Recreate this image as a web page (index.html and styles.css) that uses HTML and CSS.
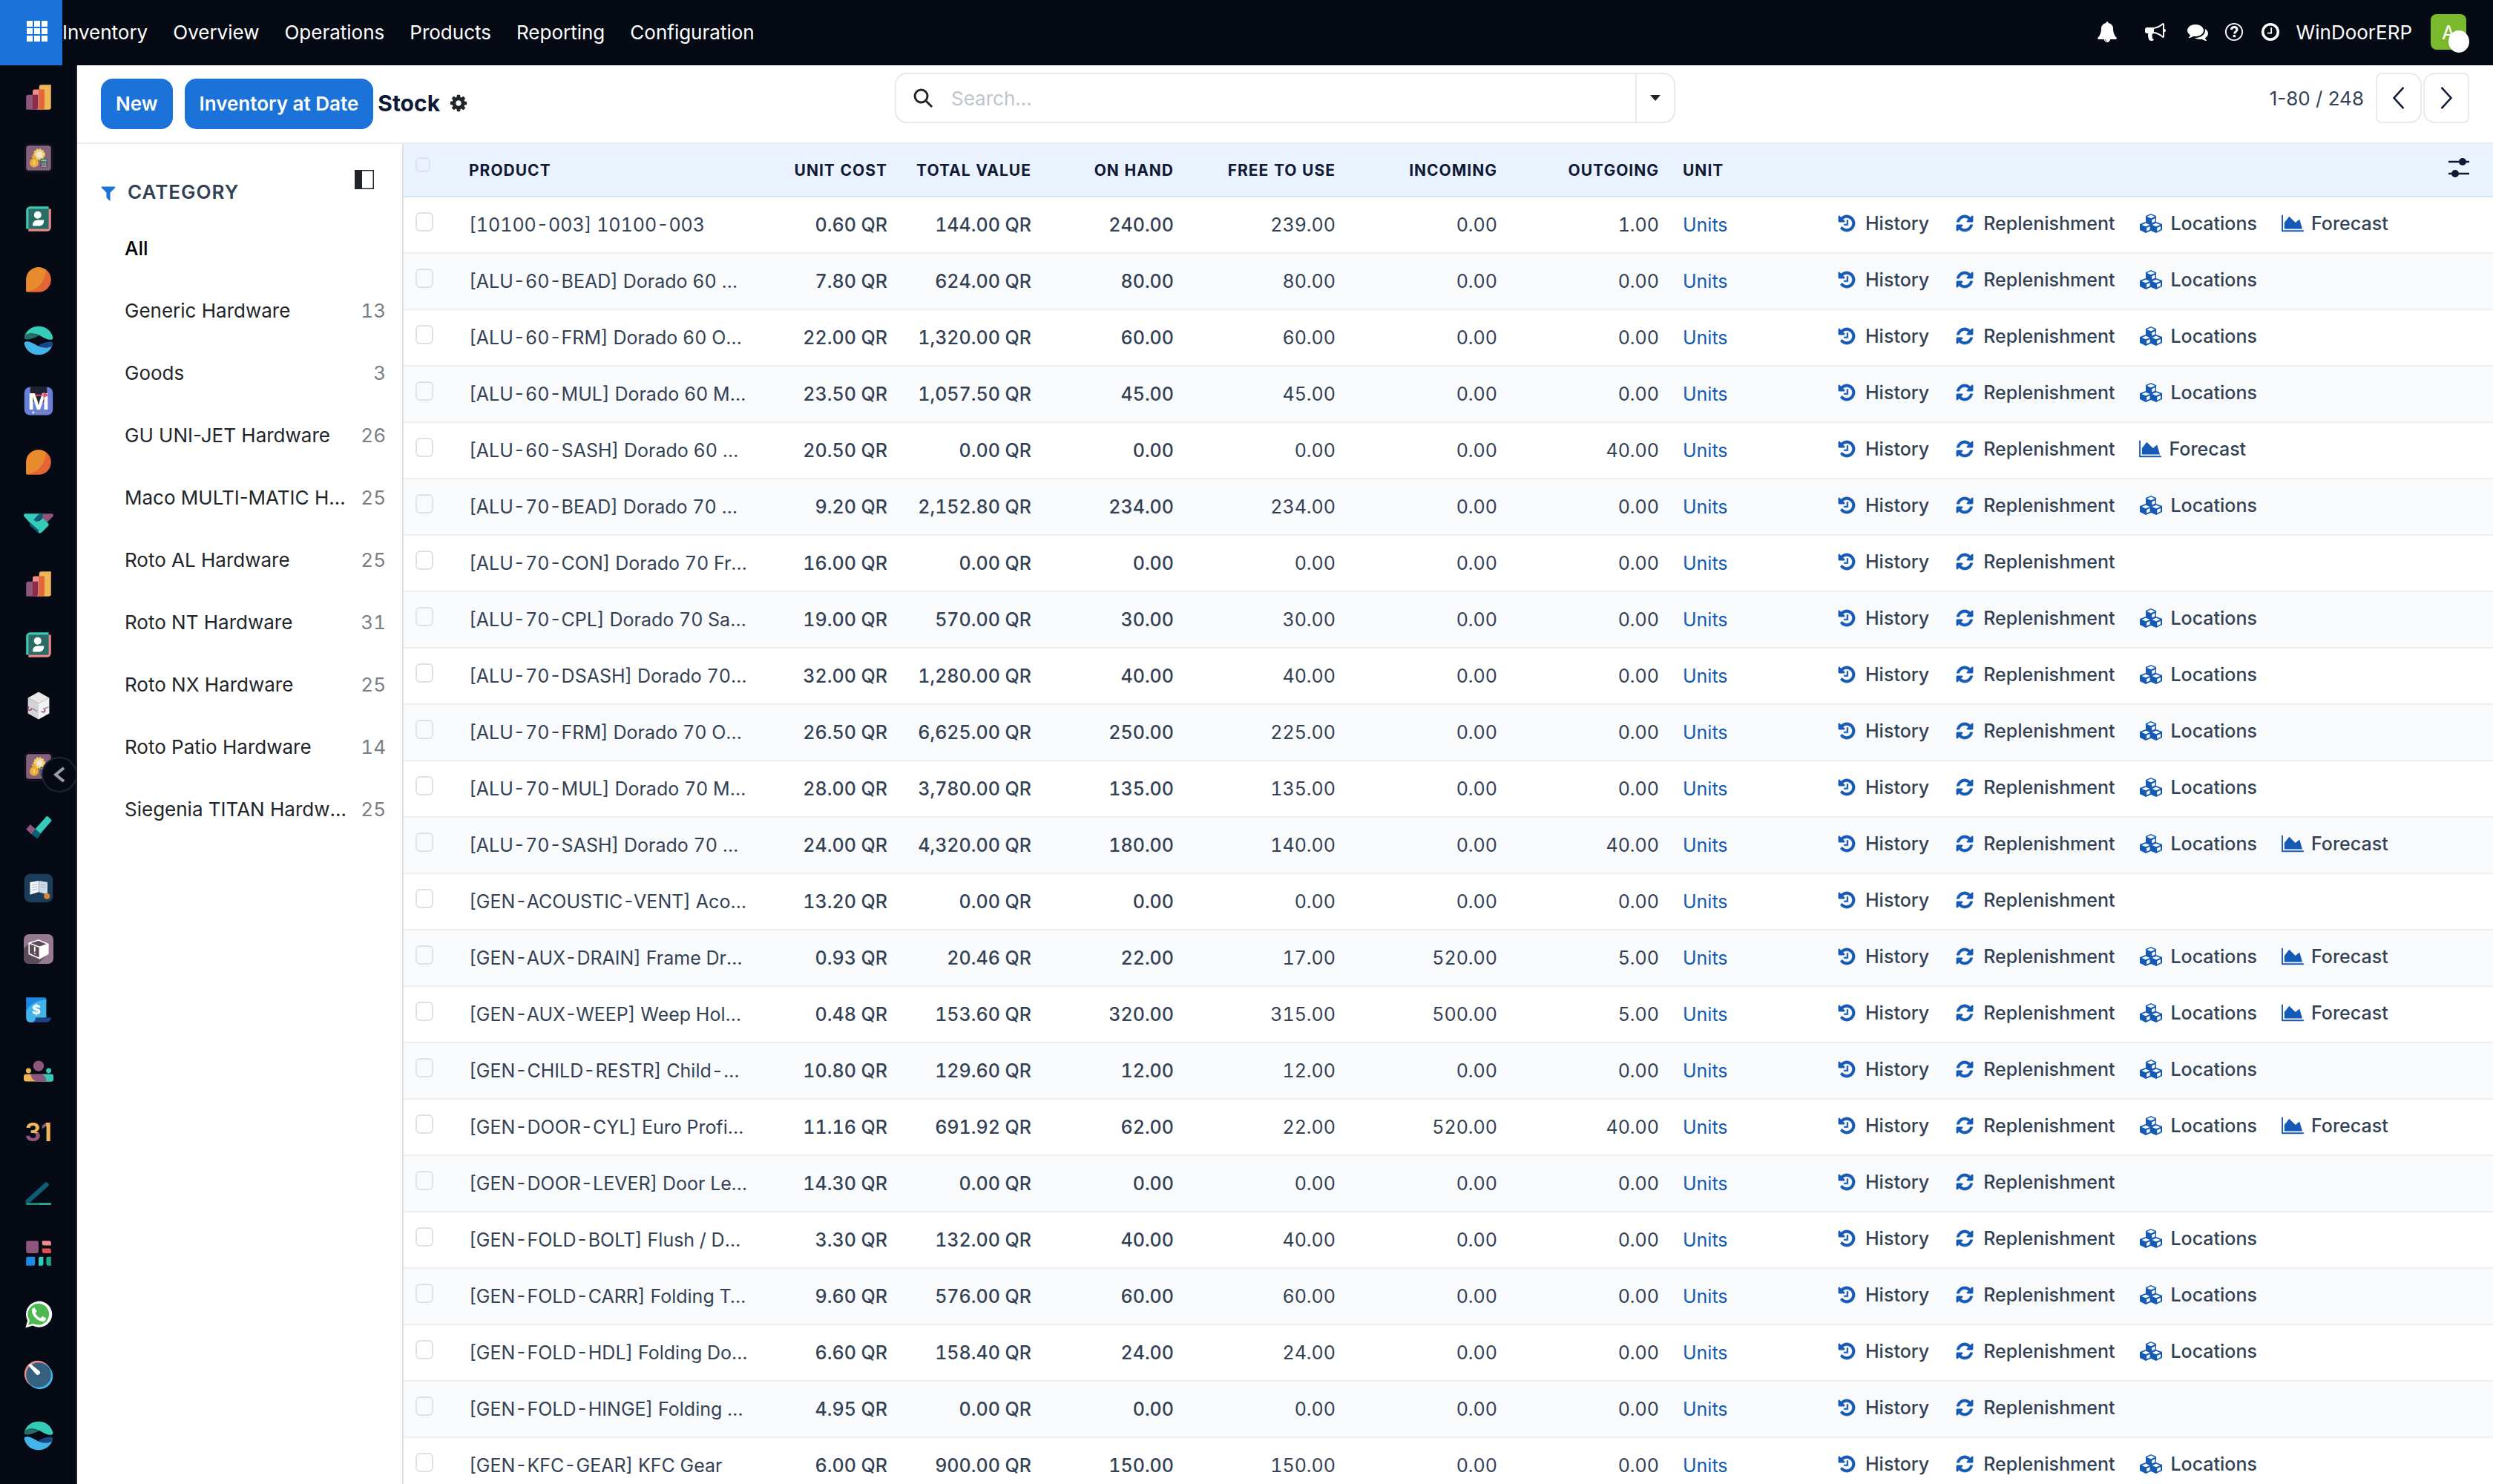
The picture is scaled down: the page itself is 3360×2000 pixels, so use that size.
FILE: index.html
```html
<!DOCTYPE html>
<html lang="en">
<head>
    <meta charset="UTF-8">
    <meta name="viewport" content="width=device-width, initial-scale=1.0">
    <title>Stock - Inventory</title>
    <link rel="stylesheet" href="styles.css">
</head>
<body>
    <!-- Icon sprite -->
    <svg class="sprite" xmlns="http://www.w3.org/2000/svg">
        <symbol id="i-history" viewBox="0 0 1792 1792"><path stroke="currentColor" stroke-width="35" d="M1664 896q0 156-61 298t-164 245-245 164-298 61q-172 0-327-72.500t-264-204.500q-7-10-6.500-22.500t8.500-20.500l137-138q10-9 25-9 16 2 23 12 73 95 179 147t225 52q104 0 198.500-40.500t163.500-109.500 109.500-163.500 40.500-198.500-40.500-198.500-109.500-163.500-163.500-109.500-198.500-40.500q-98 0-188 35.500t-160 101.500l137 138q31 30 14 69-17 40-59 40h-448q-26 0-45-19t-19-45v-448q0-42 40-59 39-17 69 14l130 129q107-101 244.500-156.500t284.500-55.500q156 0 298 61t245 164 164 245 61 298zm-640-288v448q0 14-9 23t-23 9h-320q-14 0-23-9t-9-23v-64q0-14 9-23t23-9h224v-352q0-14 9-23t23-9h64q14 0 23 9t9 23z"/></symbol>
        <symbol id="i-refresh" viewBox="0 0 1792 1792"><path stroke="currentColor" stroke-width="35" d="M1639 1056q0 5-1 7-64 268-268 434.500t-478 166.500q-146 0-282.500-55t-243.500-157l-129 129q-19 19-45 19t-45-19-19-45v-448q0-26 19-45t45-19h448q26 0 45 19t19 45-19 45l-137 137q71 66 161 102t187 36q134 0 250-65t186-179q11-17 53-117 8-23 30-23h192q13 0 22.500 9.500t9.500 22.500zm25-800v448q0 26-19 45t-45 19h-448q-26 0-45-19t-19-45 19-45l138-138q-148-137-349-137-134 0-250 65t-186 179q-11 17-53 117-8 23-30 23h-199q-13 0-22.500-9.500t-9.500-22.500v-7q65-268 270-434.500t480-166.500q146 0 284 55.500t245 156.500l130-129q19-19 45-19t45 19 19 45z"/></symbol>
        <symbol id="i-cubes" viewBox="0 0 32 28">
            <path fill="currentColor" d="M16 1l7 3v8l8 3v8l-8 4-7-3-7 3-8-4v-8l8-3V4z"/>
            <path fill="#fff" d="M16 2.600l5.400 2.300L16 7.300l-5.400-2.400zM17.200 9.200l4.400-2v4.400l-4.400 2zM9 13.700l5.400 2.200L9 18.300l-5.400-2.400zM10.200 20.100l4.400-2v4.400l-4.400 2zM23 13.700l5.400 2.200-5.400 2.400-5.400-2.400zM24.200 20.100l4.800-2.200v4.400l-4.800 2.300z"/>
        </symbol>
        <symbol id="i-chart" viewBox="0 0 2048 1792"><path d="M2048 1536v128h-2048v-1536h128v1408h1920zm-384-1024l256 896h-1664v-576l448-576 576 576z"/></symbol>
        <symbol id="i-filter" viewBox="0 0 1792 1792"><path d="M1595 295q17 41-14 70l-493 493v742q0 42-39 59-13 5-25 5-27 0-45-19l-256-256q-19-19-19-45v-486l-493-493q-31-29-14-70 17-39 59-39h1280q42 0 59 39z"/></symbol>
        <symbol id="i-cog" viewBox="0 0 1792 1792"><path d="M1152 896q0-106-75-181t-181-75-181 75-75 181 75 181 181 75 181-75 75-181zm512-109v222q0 12-8 23t-20 13l-185 28q-19 54-39 91 35 50 107 138 10 12 10 25t-9 23q-27 37-99 108t-94 71q-12 0-26-9l-138-108q-44 23-91 38-16 136-29 186-7 28-36 28h-222q-14 0-24.500-8.500t-11.500-21.500l-28-184q-49-16-90-37l-141 107q-10 9-25 9-14 0-25-11-126-114-165-168-7-10-7-23 0-12 8-23 15-21 51-66.500t54-70.500q-27-50-41-99l-183-27q-13-2-21-12.500t-8-23.500v-222q0-12 8-23t19-13l186-28q14-46 39-92-40-57-107-138-10-12-10-24 0-10 9-23 26-36 98.500-107.500t94.500-71.500q13 0 26 10l138 107q44-23 91-38 16-136 29-186 7-28 36-28h222q14 0 24.500 8.500t11.500 21.500l28 184q49 16 90 37l142-107q9-9 24-9 13 0 25 10 129 119 165 170 7 8 7 22 0 12-8 23-15 21-51 66.500t-54 70.500q26 50 41 98l183 28q13 2 21 12.500t8 23.500z"/></symbol>
        <symbol id="i-bell" viewBox="0 0 1792 1792"><path d="M912 1696q0-16-16-16-59 0-101.500-42.500t-42.500-101.500q0-16-16-16t-16 16q0 73 51.500 124.500t124.500 51.500q16 0 16-16zm816-288q0 52-38 90t-90 38h-448q0 106-75 181t-181 75-181-75-75-181h-448q-52 0-90-38t-38-90q50-42 91-88t85-119.500 74.500-158.500 50-206 19.500-260q0-152 117-282.500t307-158.500q-8-19-8-39 0-40 28-68t68-28 68 28 28 68q0 20-8 39 190 28 307 158.500t117 282.500q0 139 19.500 260t50 206 74.500 158.500 85 119.500 91 88z"/></symbol>
        <symbol id="i-bullhorn" viewBox="0 0 1792 1792"><path d="M1664 640q53 0 90.500 37.500t37.500 90.500-37.500 90.500-90.500 37.500v384q0 52-38 90t-90 38q-417-347-812-380-58 19-91 66t-31 100.500 40 92.500q-20 33-23 65.500t6 58 33.500 55 48 50 61.500 50.500q-29 58-111.500 83t-168.500 11.500-132-55.500q-7-23-29.500-87.500t-32-94.500-23-89-15-101 3.500-98.500 22-110.500h-122q-66 0-113-47t-47-113v-192q0-66 47-113t113-47h480q435 0 896-384 52 0 90 38t38 90v384zm-128 604v-954q-394 302-768 343v270q377 42 768 341z"/></symbol>
        <symbol id="i-comments" viewBox="0 0 1792 1792"><path d="M1408 768q0 139-94 257t-256.500 186.500-353.500 68.500q-86 0-176-16-124 88-278 128-36 9-86 16h-3q-11 0-20.500-8t-11.500-21q-1-3-1-6.500t.5-6.500 2-6l2.500-5 3.500-5.500 4-5 4.500-5 4-4.500q5-6 23-25t26-29.500 22.500-29 25-38.500 20.500-44q-124-72-195-177t-71-224q0-139 94-257t256.500-186.500 353.500-68.500 353.500 68.500 256.500 186.500 94 257zm384 256q0 120-71 224.500t-195 176.500q10 24 20.500 44t25 38.500 22.500 29 26 29.500 23 25q1 1 4 4.500t4.500 5 4 5 3.500 5.500l2.500 5 2 6 .5 6.500-1 6.500q-3 14-13 22t-22 7q-50-7-86-16-154-40-278-128-90 16-176 16-271 0-472-132 58 4 88 4 161 0 309-45t264-129q125-92 192-212t67-254q0-77-23-152 129 71 204 178t75 230z"/></symbol>
        <symbol id="i-help" viewBox="0 0 28 28"><circle cx="14" cy="14" r="11.200" fill="none" stroke="currentColor" stroke-width="1.800"/><path d="M10.300 11c.5-2.400 2-3.400 3.900-3.400 2.200 0 3.800 1.300 3.800 3.200 0 2.800-3.400 2.700-3.400 5.600" fill="none" stroke="currentColor" stroke-width="3"/><rect x="12.700" y="18" width="3.400" height="3.200"/></symbol>
        <symbol id="i-clock" viewBox="0 0 28 28"><circle cx="14" cy="14" r="10.300" fill="none" stroke="currentColor" stroke-width="3.600"/><path d="M15.200 8v7.600H9.800" fill="none" stroke="currentColor" stroke-width="1.800"/></symbol>

        <symbol id="app-bars" viewBox="0 0 50 50">
            <path fill="#edb659" d="M26 8a4 4 0 0 1 4-4h16v38a4 4 0 0 1-4 4H26z"/>
            <path fill="#ee8b8d" d="M15 16a4 4 0 0 1 4-4h7v34H15z"/>
            <path fill="#e46535" d="M26 12h9v30a4 4 0 0 1-4 4h-5z"/>
            <path fill="#8e557d" d="M4 25a4 4 0 0 1 4-4h7v25H4z"/>
            <path fill="#8c2c45" d="M15 21h9v21a4 4 0 0 1-4 4h-5z"/>
        </symbol>
        <symbol id="app-cost" viewBox="0 0 50 50">
            <rect x="1.500" y="1.500" width="47" height="47" rx="8" fill="#0a0a14" stroke="#25222e"/>
            <rect x="4" y="4" width="42" height="42" rx="5" fill="#85627b"/>
            <circle cx="26" cy="19" r="8.500" fill="#f5d268" stroke="#f5d268" stroke-width="3" stroke-dasharray="3 2"/>
            <circle cx="26.500" cy="19.500" r="5" fill="#ece9dc"/>
            <circle cx="17.500" cy="33" r="7.500" fill="#e9ad38"/>
            <path d="M13 21h8l-2 5h-4z" fill="#e9ad38"/>
            <path d="M19.500 30.500c-3-1.500-4 2-2 2.500s1 3.500-2 2.500" fill="none" stroke="#f8dc7c" stroke-width="1.400"/>
            <rect x="28" y="26" width="12" height="15" rx="1" fill="#51525e"/>
            <rect x="29.500" y="27.500" width="9" height="3" fill="#63d8a7"/>
            <path d="M30 33.500h8M30 36.500h8M30 39.200h8" stroke="#c5c6cc" stroke-width="1.600" stroke-dasharray="2 1"/>
        </symbol>
        <symbol id="app-contacts" viewBox="0 0 50 50">
            <path fill="#35cbb9" d="M4 11a7 7 0 0 1 7-7h31v38H4z"/>
            <path fill="#ee8b8d" d="M8 8h38v31a7 7 0 0 1-7 7H8z"/>
            <path fill="#276c66" d="M8 8h34v34H8z"/>
            <circle cx="23.500" cy="18.500" r="6.200" fill="#fff"/>
            <path fill="#fff" d="M15 37v-1.500c0-5 3.500-8.500 8.500-8.500H34v1.500c0 5-3.500 8.500-8.500 8.500z"/>
        </symbol>
        <symbol id="app-discuss" viewBox="0 0 50 50">
            <path fill="#e46535" d="M4 25a21 21 0 1 1 21 21H7a3 3 0 0 1-3-3z"/>
            <path fill="#e78b2c" d="M4 25A21 21 0 0 1 37.500 8C37 27 24 43 5 45.300a3 3 0 0 1-1-2.300z"/>
        </symbol>
        <symbol id="app-swirl" viewBox="0 0 50 50">
            <path fill="#35cbb9" d="M1 19C4 8 13 1 25 1s21 7 24 18c1 5-4 5-8 4-10-3-16-10-27-10C7 13 3 15 1 19z"/>
            <path fill="#276c66" d="M1 19c1-5 6-6 12-6 5 0 9 2 12.500 4C19 20 13 23 6 23c-4 0-6-1-5-4z"/>
            <path fill="#1b4589" d="M25 33c6-3 12-6 19-6 4 0 5.500 1 5 4-.6 3-5 6-12 6-5 0-9-2-12-4z"/>
            <path fill="#43b4ea" d="M1 31c-1-5 4-5 8-4 10 3 16 10 27 10 6 0 10-1 12.500-4.500C45 42 37 49 25 49S4 42 1 31z"/>
        </symbol>
        <symbol id="app-hand" viewBox="0 0 50 50">
            <path fill="#8e557d" d="M25 9h22c3 0 4 3 2 5L39 24 25 14zM10 26l14 15c2 1 3 0 4-1l-9-14z"/>
            <path fill="#35cbb9" d="M3 9h25l-8 9 5 4 7-5 9 8c2 2 1 4 0 5L30 41c-2 1-4 1-5 0L1 14c-2-2-1-5 2-5z"/>
            <path fill="#0f5c76" d="M26 9h6v7l-7 5c-3 2-7 1-8-2zM12 25l13 12c1 2 0 3-1 4L10 29c-1-2 0-4 2-4z"/>
        </symbol>
        <symbol id="app-cube" viewBox="0 0 50 50">
            <path fill="#e9e9ea" d="M25 2l18 10-18 9L7 12z"/>
            <path fill="#d4d4d7" d="M7 12l18 9v27L7 38z"/>
            <path fill="#f1f1f2" d="M43 12l-18 9v27l18-10z"/>
            <path d="M9 27a3 3 0 1 0 4 2M30 34a3 3 0 1 0 3-4" fill="none" stroke="#96377d" stroke-width="1.800"/>
            <path d="M14 30l3 1 3 2 3 1M34 31l3-2 3-1 2-1" fill="none" stroke="#9a9a9d" stroke-width="2"/>
        </symbol>
        <symbol id="app-check" viewBox="0 0 50 50">
            <path fill="#35cbb9" d="M19 28L38 7a2 2 0 0 1 3 0l5 5a2 2 0 0 1 0 3L28 36z"/>
            <path fill="#8e557d" d="M4 28l7-8 9 8-7 9z"/>
            <path fill="#0f5c76" d="M13 37l7-9 9 8-6 8z"/>
        </symbol>
        <symbol id="app-book" viewBox="0 0 50 50">
            <rect x="1" y="1" width="48" height="48" rx="10" fill="#1b3d5a"/>
            <path fill="#f3f6f8" d="M10.500 15L25 12.500v19L10.500 36z"/>
            <path fill="#cfdde8" d="M40 15l-14.500-2.500v19L40 36z"/>
            <path d="M14 20l9-1.500M14 24l9-1.500M14 28l9-1.500M28 18.500l9 1.500M28 22.500l9 1.500" stroke="#8fa9bc" stroke-width="1"/>
            <circle cx="39" cy="38.500" r="5" fill="#d6853b"/>
        </symbol>
        <symbol id="app-box" viewBox="0 0 50 50">
            <rect width="50" height="50" rx="9" fill="#967a92"/>
            <path fill="#5c4b59" d="M0 24L10 15l31 17-17 18H9a9 9 0 0 1-9-9z"/>
            <path fill="#5c4b59" stroke="#fff" stroke-width="2" stroke-linejoin="round" d="M9 15l16-5 16 7-14 5zM9 15l18 7v19L9 33z"/>
            <path fill="#fff" stroke="#fff" stroke-width="2" stroke-linejoin="round" d="M27 22l14-5v16l-14 8z"/>
            <path d="M18.500 21v8.500M18.500 31.500v2" stroke="#fff" stroke-width="2.400"/>
        </symbol>
        <symbol id="app-people" viewBox="0 0 50 50">
            <circle cx="8" cy="25" r="4.300" fill="#edb659"/><circle cx="42" cy="25" r="4.300" fill="#35cbb9"/><circle cx="25" cy="17" r="9" fill="#8e557d"/>
            <rect x="0" y="31" width="50" height="12" rx="4" fill="#edb659"/>
            <path fill="#35cbb9" d="M30 31h17a3 3 0 0 1 3 3v6a3 3 0 0 1-3 3H30z"/>
            <path fill="#8e557d" d="M12 31h16c6 0 10 5 10 12H24c-7 0-12-5-12-12z"/>
        </symbol>
        <symbol id="app-sign" viewBox="0 0 50 50">
            <path d="M7 40L38 12" stroke="#0f5c76" stroke-width="8" stroke-linecap="round"/>
            <path d="M4 44.500h24" stroke="#1ea887" stroke-width="3"/><path d="M27 44.500h19" stroke="#35cbb9" stroke-width="3"/>
        </symbol>
        <symbol id="app-dash" viewBox="0 0 50 50">
            <rect x="4" y="4" width="21" height="21" rx="3" fill="#8e557d"/>
            <path fill="#ee8b8d" d="M31 4h12a3 3 0 0 1 3 3v5H34a3 3 0 0 1-3-3z"/><path fill="#e34d52" d="M31 17h12a3 3 0 0 1 3 3v5H34a3 3 0 0 1-3-3z"/>
            <path fill="#1e88e5" d="M7 31h12v12a3 3 0 0 1-3 3H4V34a3 3 0 0 1 3-3z"/><path fill="#35cbb9" d="M28 31h5v12a3 3 0 0 1-3 3h-5V34a3 3 0 0 1 3-3z"/><path fill="#1ea887" d="M41 31h5v15h-5a3 3 0 0 1-3-3v-9a3 3 0 0 1 3-3z"/>
        </symbol>
        <symbol id="app-whatsapp" viewBox="0 0 50 50">
            <path fill="#fff" d="M3 48l3.500-12A22 22 0 1 1 15 44.500z"/>
            <path fill="#4cb850" d="M7.500 43.500l2.400-8A18 18 0 1 1 16 41z"/>
            <path fill="#fff" d="M18 14c-2-.5-5 2-4.500 6C15 29 23 36 31 37.500c4 .5 6.500-2 6.500-5.500l-6-3.500-3 3.500c-4-1.500-7-4.500-9-8.500l2.500-3z"/>
        </symbol>
        <symbol id="app-gauge" viewBox="0 0 50 50">
            <circle cx="23.500" cy="23.500" r="22.500" fill="#ee8b8d"/><circle cx="27" cy="27" r="22" fill="#43b4ea"/><circle cx="25" cy="25" r="21" fill="#35607f"/>
            <path fill="#fff" d="M8 9l3-3 15 12a3.600 3.600 0 1 1-5 6z"/>
        </symbol>
    </svg>

    <header class="topbar">
        <button class="apps-button" aria-label="Apps">
            <svg viewBox="0 0 28 28"><path d="M0 0h8v8H0zM10 0h8v8h-8zM20 0h8v8h-8zM0 10h8v8H0zM10 10h8v8h-8zM20 10h8v8h-8zM0 20h8v8H0zM10 20h8v8h-8zM20 20h8v8h-8z"/></svg>
        </button>
        <nav class="main-menu">
            <a href="#">Inventory</a>
            <a href="#">Overview</a>
            <a href="#">Operations</a>
            <a href="#">Products</a>
            <a href="#">Reporting</a>
            <a href="#">Configuration</a>
        </nav>
        <div class="systray">
            <button class="bell" aria-label="Notifications"><svg><use href="#i-bell"/></svg></button>
            <button class="news" aria-label="Announcements"><svg><use href="#i-bullhorn"/></svg></button>
            <button aria-label="Messages"><svg><use href="#i-comments"/></svg></button>
            <button aria-label="Help"><svg><use href="#i-help"/></svg></button>
            <button aria-label="Activities"><svg><use href="#i-clock"/></svg></button>
            <a class="company" href="#">WinDoorERP</a>
            <button class="avatar" aria-label="User menu">A<span class="status"></span></button>
        </div>
    </header>

    <div class="layout">
        <nav class="app-sidebar" id="appSidebar">
            <button class="collapse-button" aria-label="Collapse sidebar">
                <svg viewBox="0 0 20 24"><path d="M16 3L5 12l11 9" fill="none" stroke="currentColor" stroke-width="4"/></svg>
            </button>
        </nav>

        <main class="content">
            <div class="control-panel">
                <div class="panel-left">
                    <button class="btn">New</button>
                    <button class="btn">Inventory at Date</button>
                    <div class="breadcrumb">
                        <h1>Stock</h1>
                        <button class="cog" aria-label="Actions"><svg><use href="#i-cog"/></svg></button>
                    </div>
                </div>
                <div class="search">
                    <svg class="search-icon" viewBox="0 0 28 28"><circle cx="11.500" cy="11.500" r="8.500"/><path d="M17.500 17.500l8.500 8.500"/></svg>
                    <input type="text" placeholder="Search..." aria-label="Search">
                    <button class="search-toggle" aria-label="Search options"><svg viewBox="0 0 14 8"><path d="M0 0h14L7 8z"/></svg></button>
                </div>
                <div class="pager">
                    <span>1-80 / 248</span>
                    <div class="pager-buttons">
                        <button class="prev" aria-label="Previous"><svg viewBox="0 0 28 28"><path d="M19 3L9 14l10 11"/></svg></button>
                        <button class="next" aria-label="Next"><svg viewBox="0 0 28 28"><path d="M9 3l10 11L9 25"/></svg></button>
                    </div>
                </div>
            </div>

            <div class="view">
                <aside class="category-panel">
                    <div class="category-header">
                        <svg class="filter-icon"><use href="#i-filter"/></svg>
                        <h2>Category</h2>
                        <button class="panel-toggle" aria-label="Toggle panel"><svg viewBox="0 0 28 28"><path fill-rule="evenodd" d="M1 1h26v26H1zM11 2.500v23h14.500v-23z"/></svg></button>
                    </div>
                    <ul class="category-list">
                        <li class="active"><a href="#">All</a></li>
                        <li><a href="#">Generic Hardware</a><span>13</span></li>
                        <li><a href="#">Goods</a><span>3</span></li>
                        <li><a href="#">GU UNI-JET Hardware</a><span>26</span></li>
                        <li><a href="#">Maco MULTI-MATIC Hardware</a><span>25</span></li>
                        <li><a href="#">Roto AL Hardware</a><span>25</span></li>
                        <li><a href="#">Roto NT Hardware</a><span>31</span></li>
                        <li><a href="#">Roto NX Hardware</a><span>25</span></li>
                        <li><a href="#">Roto Patio Hardware</a><span>14</span></li>
                        <li><a href="#">Siegenia TITAN Hardware</a><span>25</span></li>
                    </ul>
                </aside>

                <div class="list">
                    <table>
                        <colgroup>
                            <col class="c-check"><col class="c-product"><col class="c-cost"><col class="c-total"><col class="c-hand"><col class="c-qty"><col class="c-qty"><col class="c-qty"><col class="c-unit"><col>
                        </colgroup>
                        <thead>
                            <tr>
                                <th class="check"><input type="checkbox" aria-label="Select all"></th>
                                <th>Product</th>
                                <th class="num">Unit Cost</th>
                                <th class="num">Total Value</th>
                                <th class="num">On Hand</th>
                                <th class="num">Free to Use</th>
                                <th class="num">Incoming</th>
                                <th class="num">Outgoing</th>
                                <th>Unit</th>
                                <th class="options"><button aria-label="Optional columns"><svg viewBox="0 0 28 28"><path d="M0 6h28M0 22h28" stroke="currentColor" stroke-width="2.500"/><circle cx="19" cy="6" r="5"/><circle cx="9" cy="22" r="5"/></svg></button></th>
                            </tr>
                        </thead>
                        <tbody id="stockRows"></tbody>
                    </table>
                </div>
            </div>
        </main>
    </div>

    <script src="script.js"></script>
</body>
</html>
```

FILE: styles.css
```css
* {
    box-sizing: border-box;
}
body {
    margin: 0;
    height: 100vh;
    display: flex;
    flex-direction: column;
    overflow: hidden;
    font-family: Inter, sans-serif;
    font-size: 26px;
    color: #212529;
    background: #fff;
}
button {
    border: none;
    padding: 0;
    background: none;
    font: inherit;
    color: inherit;
    cursor: pointer;
}
a {
    color: inherit;
    text-decoration: none;
}
svg {
    display: block;
    fill: currentColor;
}
.sprite {
    position: absolute;
    width: 0;
    height: 0;
}

/* Top bar */
.topbar {
    display: flex;
    flex: none;
    height: 88px;
    background: #050a14;
    color: #fff;
}
.apps-button {
    width: 84px;
    padding: 0 0 4px 36px;
    background: #1b73da;
}
.apps-button svg {
    width: 28px;
    height: 28px;
}
.main-menu {
    display: flex;
    align-items: center;
    gap: 34px;
    padding-bottom: 2px;
}
.systray {
    display: flex;
    align-items: center;
    gap: 21px;
    margin-left: auto;
    padding: 0 36px 2px 0;
}
.systray svg {
    width: 28px;
    height: 28px;
}
.systray .bell {
    margin-right: 16px;
}
.systray .news {
    margin-right: 8px;
}
.avatar {
    position: relative;
    width: 48px;
    height: 48px;
    margin-left: 4px;
    border-radius: 8px;
    background: #7ab92d;
}
.status {
    position: absolute;
    right: -4px;
    bottom: -4px;
    width: 28px;
    height: 30px;
    border-radius: 50%;
    background: #fff;
}

/* App sidebar */
.layout {
    display: flex;
    flex: 1;
    min-height: 0;
}
.app-sidebar {
    position: relative;
    flex: none;
    width: 104px;
    padding-top: 2px;
    overflow: hidden;
    background: #050a14;
    box-shadow: inset -2px 0 #1d2533;
}
.app-sidebar a {
    display: flex;
    align-items: center;
    justify-content: center;
    height: 82px;
}
.app-sidebar a svg {
    width: 40px;
    height: 40px;
}
.m-letter {
    font-size: 38px;
    font-weight: 700;
    text-anchor: middle;
    fill: #fff;
}
.dollar {
    font-size: 22px;
    font-weight: 800;
    text-anchor: middle;
    fill: #fff;
}
.day {
    font-size: 42px;
    font-weight: 700;
}
.collapse-button {
    position: absolute;
    top: 932px;
    right: 0;
    display: flex;
    align-items: center;
    justify-content: center;
    width: 48px;
    height: 48px;
    border: 2px solid #1d2533;
    border-radius: 50%;
    background: #050a14;
    color: #9b9da2;
}
.collapse-button svg {
    width: 20px;
    height: 24px;
}

/* Control panel */
.content {
    display: flex;
    flex: 1;
    flex-direction: column;
    min-width: 0;
}
.control-panel {
    display: grid;
    grid-template-columns: 1fr 1052px 1fr;
    align-items: start;
    flex: none;
    height: 106px;
    padding: 10px 32px 0;
    border-bottom: 2px solid #e7e9ed;
}
.panel-left {
    display: flex;
    align-items: center;
    padding-top: 8px;
}
.btn {
    height: 68px;
    margin-right: 16px;
    padding: 0 20px 2px;
    border-radius: 16px;
    background: #1b73da;
    color: #fff;
    font-weight: 600;
}
.btn + .breadcrumb {
    margin-left: -10px;
}
.breadcrumb {
    display: flex;
    align-items: center;
    gap: 12px;
    padding-bottom: 2px;
}
.breadcrumb h1 {
    margin: 0;
    font-size: 30px;
    font-weight: 700;
    color: #0f1a35;
}
.cog svg {
    width: 26px;
    height: 26px;
}
.search {
    display: flex;
    align-items: center;
    height: 68px;
    border: 2px solid #e7e9ed;
    border-radius: 16px;
}
.search-icon {
    width: 28px;
    height: 28px;
    margin: 0 24px 0 22px;
    fill: none;
    stroke: #212529;
    stroke-width: 3;
}
.search input {
    flex: 1;
    height: 100%;
    padding: 0;
    border: none;
    outline: none;
    background: none;
    font: inherit;
}
.search input::placeholder {
    color: #bfc5cd;
}
.search-toggle {
    display: flex;
    align-items: center;
    justify-content: center;
    width: 52px;
    height: 100%;
    border-left: 2px solid #e7e9ed;
}
.search-toggle svg {
    width: 14px;
    height: 8px;
}
.pager {
    display: flex;
    align-items: center;
    justify-content: flex-end;
    gap: 16px;
    color: #334155;
}
.pager-buttons {
    display: flex;
    gap: 2px;
}
.pager-buttons button {
    display: flex;
    align-items: center;
    justify-content: center;
    width: 62px;
    height: 68px;
    border: 2px solid #e7e9ed;
    color: #0f1a35;
}
.prev {
    border-radius: 8px 16px 16px 8px;
}
.next {
    border-radius: 16px 8px 8px 16px;
}
.pager-buttons svg {
    width: 36px;
    height: 36px;
    fill: none;
    stroke: currentColor;
    stroke-width: 2;
}

/* Category panel */
.view {
    display: flex;
    flex: 1;
    min-height: 0;
}
.category-panel {
    flex: none;
    width: 440px;
    padding: 28px 22px 0 32px;
    border-right: 2px solid #dee2e6;
}
.category-header {
    display: flex;
    align-items: flex-start;
    height: 70px;
}
.filter-icon {
    width: 24px;
    height: 24px;
    margin: 26px 14px 0 -2px;
    color: #1b73da;
}
.category-header h2 {
    margin: 15px 0 0;
    font-size: 26px;
    font-weight: 600;
    line-height: 44px;
    letter-spacing: 1px;
    text-transform: uppercase;
    color: #334155;
}
.panel-toggle {
    margin: 6px 15px 0 auto;
}
.panel-toggle svg {
    width: 28px;
    height: 28px;
}
.category-list {
    margin: 0;
    padding: 0 0 0 32px;
    list-style: none;
}
.category-list li {
    display: flex;
    align-items: center;
    gap: 16px;
    height: 84px;
}
.category-list a {
    flex: 1;
    overflow: hidden;
    white-space: nowrap;
    text-overflow: ellipsis;
}
.category-list span {
    color: #7a7f85;
    font-variant-numeric: tabular-nums;
}
.category-list .active {
    color: #000;
    font-weight: 500;
}

/* Stock list */
.list {
    flex: 1;
    min-width: 0;
    overflow: auto;
    scrollbar-width: none;
}
table {
    width: 100%;
    table-layout: fixed;
    border-collapse: separate;
    border-spacing: 0;
    color: #334155;
    font-size: 25px;
    font-variant-numeric: tabular-nums;
}
.c-check { width: 72px; }
.c-product { width: 404px; }
.c-cost { width: 192px; }
.c-total { width: 194px; }
.c-hand { width: 192px; }
.c-qty { width: 218px; }
.c-unit { width: 206px; }
th, td {
    padding: 0 16px;
    text-align: left;
    white-space: nowrap;
    overflow: hidden;
    text-overflow: ellipsis;
}
th {
    height: 72px;
    border-bottom: 2px solid #d3e5fb;
    background: #eaf2ff;
    color: #0f1a35;
    font-size: 21px;
    font-weight: 700;
    letter-spacing: 1px;
    text-transform: uppercase;
}
td {
    height: 76px;
    border-bottom: 2px solid #eceef1;
}
tbody tr:nth-child(even) {
    background: #f9fafc;
}
.product {
    padding-right: 12px;
}
.num {
    padding-left: 8px;
    text-align: right;
}
.strong {
    font-weight: 500;
}
.unit a {
    color: #155ab5;
}
.check {
    padding-bottom: 8px;
}
.check input {
    display: block;
    width: 24px;
    height: 26px;
    margin: 0;
    appearance: none;
    border: 2px solid #dee2e6;
    border-radius: 6px;
}
th.check {
    padding-bottom: 14px;
}
th.check input {
    width: 20px;
    height: 20px;
}
.options button {
    display: block;
    margin: 0 16px 6px auto;
}
.options svg {
    width: 28px;
    height: 28px;
}
.actions div {
    display: flex;
    gap: 33px;
    padding-bottom: 4px;
}
.actions button {
    display: flex;
    align-items: center;
    gap: 10px;
    font-weight: 500;
}
.actions svg {
    width: 30px;
    height: 26px;
    color: #155ab5;
}
.actions .cubes {
    width: 32px;
    height: 28px;
}
```

FILE: script.js
```js
const apps = [
    ['bars', 'Sales'], ['cost', 'Costing'], ['contacts', 'Contacts'], ['discuss', 'Discuss'],
    ['swirl', 'Project'], ['m', 'Manufacturing'], ['discuss', 'Chat'], ['hand', 'CRM'],
    ['bars', 'Reports'], ['contacts', 'Partners'], ['cube', 'Products'], ['cost', 'Expenses'],
    ['check', 'To-do'], ['book', 'Catalogue'], ['box', 'Inventory'], ['invoice', 'Invoicing'],
    ['people', 'Employees'], ['calendar', 'Calendar'], ['sign', 'Sign'], ['dash', 'Dashboards'],
    ['whatsapp', 'WhatsApp'], ['gauge', 'Timesheets'], ['swirl', 'Planning']
];

// icons with lettering are drawn inline, the rest come from the sprite
const letterIcons = {
    m: `<rect x="1" y="1" width="48" height="47" rx="9" fill="#6b7ed8"/>
        <path d="M11 1h28v20L25 33 11 21z" fill="#1f2331"/>
        <text x="25" y="39" class="m-letter">M</text>
        <path d="M19 13.500h14V9l9 5.500-9 5v-4H19z" fill="#e4566c"/>
        <circle cx="16" cy="43.500" r="2" fill="#e6e8f2"/><circle cx="22" cy="43.500" r="2" fill="#8c8f99"/>
        <circle cx="28.500" cy="43.500" r="2" fill="#8c8f99"/><circle cx="35" cy="43.500" r="2" fill="#8c8f99"/>`,
    invoice: `<path fill="#1b4589" d="M16 38h30c0 4-4 8-8 8H12z"/>
        <path fill="#1e88e5" d="M4 4h31a3 3 0 0 1 3 3v4L4 30z"/>
        <path fill="#43b4ea" d="M38 8v30H20c0 5-3 8-8 8s-8-3-8-8V28C9 16 22 8 38 8z"/>
        <text x="21" y="32" class="dollar">$</text>`,
    calendar: `<linearGradient id="three" x1="0" y1="0" x2="0" y2="1"><stop offset="55%" stop-color="#edb659"/><stop offset="55%" stop-color="#8e557d"/></linearGradient>
        <linearGradient id="one" x1="0" y1="0" x2="1" y2="0"><stop offset="45%" stop-color="#8e557d"/><stop offset="45%" stop-color="#edb659"/></linearGradient>
        <text x="2" y="41" class="day" fill="url(#three)">3</text>
        <text x="29" y="41" class="day" fill="url(#one)">1</text>`
};

// product, unit cost, total value, on hand, free to use, incoming, outgoing, actions
// actions: L = Locations, F = Forecast (History and Replenishment are on every row)
const stock = [
    ['[10100-003] 10100-003', '0.60', '144.00', '240.00', '239.00', '0.00', '1.00', 'LF'],
    ['[ALU-60-BEAD] Dorado 60 Glazing Bead', '7.80', '624.00', '80.00', '80.00', '0.00', '0.00', 'L'],
    ['[ALU-60-FRM] Dorado 60 Outer Frame', '22.00', '1,320.00', '60.00', '60.00', '0.00', '0.00', 'L'],
    ['[ALU-60-MUL] Dorado 60 Mullion', '23.50', '1,057.50', '45.00', '45.00', '0.00', '0.00', 'L'],
    ['[ALU-60-SASH] Dorado 60 Sash', '20.50', '0.00', '0.00', '0.00', '0.00', '40.00', 'F'],
    ['[ALU-70-BEAD] Dorado 70 Glazing Bead', '9.20', '2,152.80', '234.00', '234.00', '0.00', '0.00', 'L'],
    ['[ALU-70-CON] Dorado 70 Frame Connector', '16.00', '0.00', '0.00', '0.00', '0.00', '0.00', ''],
    ['[ALU-70-CPL] Dorado 70 Sash Coupler', '19.00', '570.00', '30.00', '30.00', '0.00', '0.00', 'L'],
    ['[ALU-70-DSASH] Dorado 70 Door Sash', '32.00', '1,280.00', '40.00', '40.00', '0.00', '0.00', 'L'],
    ['[ALU-70-FRM] Dorado 70 Outer Frame', '26.50', '6,625.00', '250.00', '225.00', '0.00', '0.00', 'L'],
    ['[ALU-70-MUL] Dorado 70 Mullion', '28.00', '3,780.00', '135.00', '135.00', '0.00', '0.00', 'L'],
    ['[ALU-70-SASH] Dorado 70 Sash', '24.00', '4,320.00', '180.00', '140.00', '0.00', '40.00', 'LF'],
    ['[GEN-ACOUSTIC-VENT] Acoustic Vent', '13.20', '0.00', '0.00', '0.00', '0.00', '0.00', ''],
    ['[GEN-AUX-DRAIN] Frame Drain Cap', '0.93', '20.46', '22.00', '17.00', '520.00', '5.00', 'LF'],
    ['[GEN-AUX-WEEP] Weep Hole Cover', '0.48', '153.60', '320.00', '315.00', '500.00', '5.00', 'LF'],
    ['[GEN-CHILD-RESTR] Child-Safety Restrictor', '10.80', '129.60', '12.00', '12.00', '0.00', '0.00', 'L'],
    ['[GEN-DOOR-CYL] Euro Profile Cylinder', '11.16', '691.92', '62.00', '22.00', '520.00', '40.00', 'LF'],
    ['[GEN-DOOR-LEVER] Door Lever Set', '14.30', '0.00', '0.00', '0.00', '0.00', '0.00', ''],
    ['[GEN-FOLD-BOLT] Flush / Deadbolt', '3.30', '132.00', '40.00', '40.00', '0.00', '0.00', 'L'],
    ['[GEN-FOLD-CARR] Folding Top Carriage', '9.60', '576.00', '60.00', '60.00', '0.00', '0.00', 'L'],
    ['[GEN-FOLD-HDL] Folding Door Handle', '6.60', '158.40', '24.00', '24.00', '0.00', '0.00', 'L'],
    ['[GEN-FOLD-HINGE] Folding Door Hinge', '4.95', '0.00', '0.00', '0.00', '0.00', '0.00', ''],
    ['[GEN-KFC-GEAR] KFC Gear', '6.00', '900.00', '150.00', '150.00', '0.00', '0.00', 'L']
];

function appIcon(icon) {
    if (letterIcons[icon]) {
        return `<svg viewBox="0 0 50 50">${letterIcons[icon]}</svg>`;
    }
    return `<svg><use href="#app-${icon}"/></svg>`;
}

function action(icon, label) {
    return `<button><svg class="${icon}"><use href="#i-${icon}"/></svg>${label}</button>`;
}

document.getElementById('appSidebar').insertAdjacentHTML('afterbegin', apps.map(([icon, name]) =>
    `<a href="#" aria-label="${name}">${appIcon(icon)}</a>`
).join(''));

document.getElementById('stockRows').innerHTML = stock.map(row => {
    const [product, cost, total, onHand, free, incoming, outgoing, extra] = row;
    return `<tr>
        <td class="check"><input type="checkbox" aria-label="Select ${product}"></td>
        <td class="product">${product}</td>
        <td class="num strong">${cost} QR</td>
        <td class="num strong">${total} QR</td>
        <td class="num strong">${onHand}</td>
        <td class="num">${free}</td>
        <td class="num">${incoming}</td>
        <td class="num">${outgoing}</td>
        <td class="unit"><a href="#">Units</a></td>
        <td class="actions"><div>
            ${action('history', 'History')}
            ${action('refresh', 'Replenishment')}
            ${extra.includes('L') ? action('cubes', 'Locations') : ''}
            ${extra.includes('F') ? action('chart', 'Forecast') : ''}
        </div></td>
    </tr>`;
}).join('');
```
